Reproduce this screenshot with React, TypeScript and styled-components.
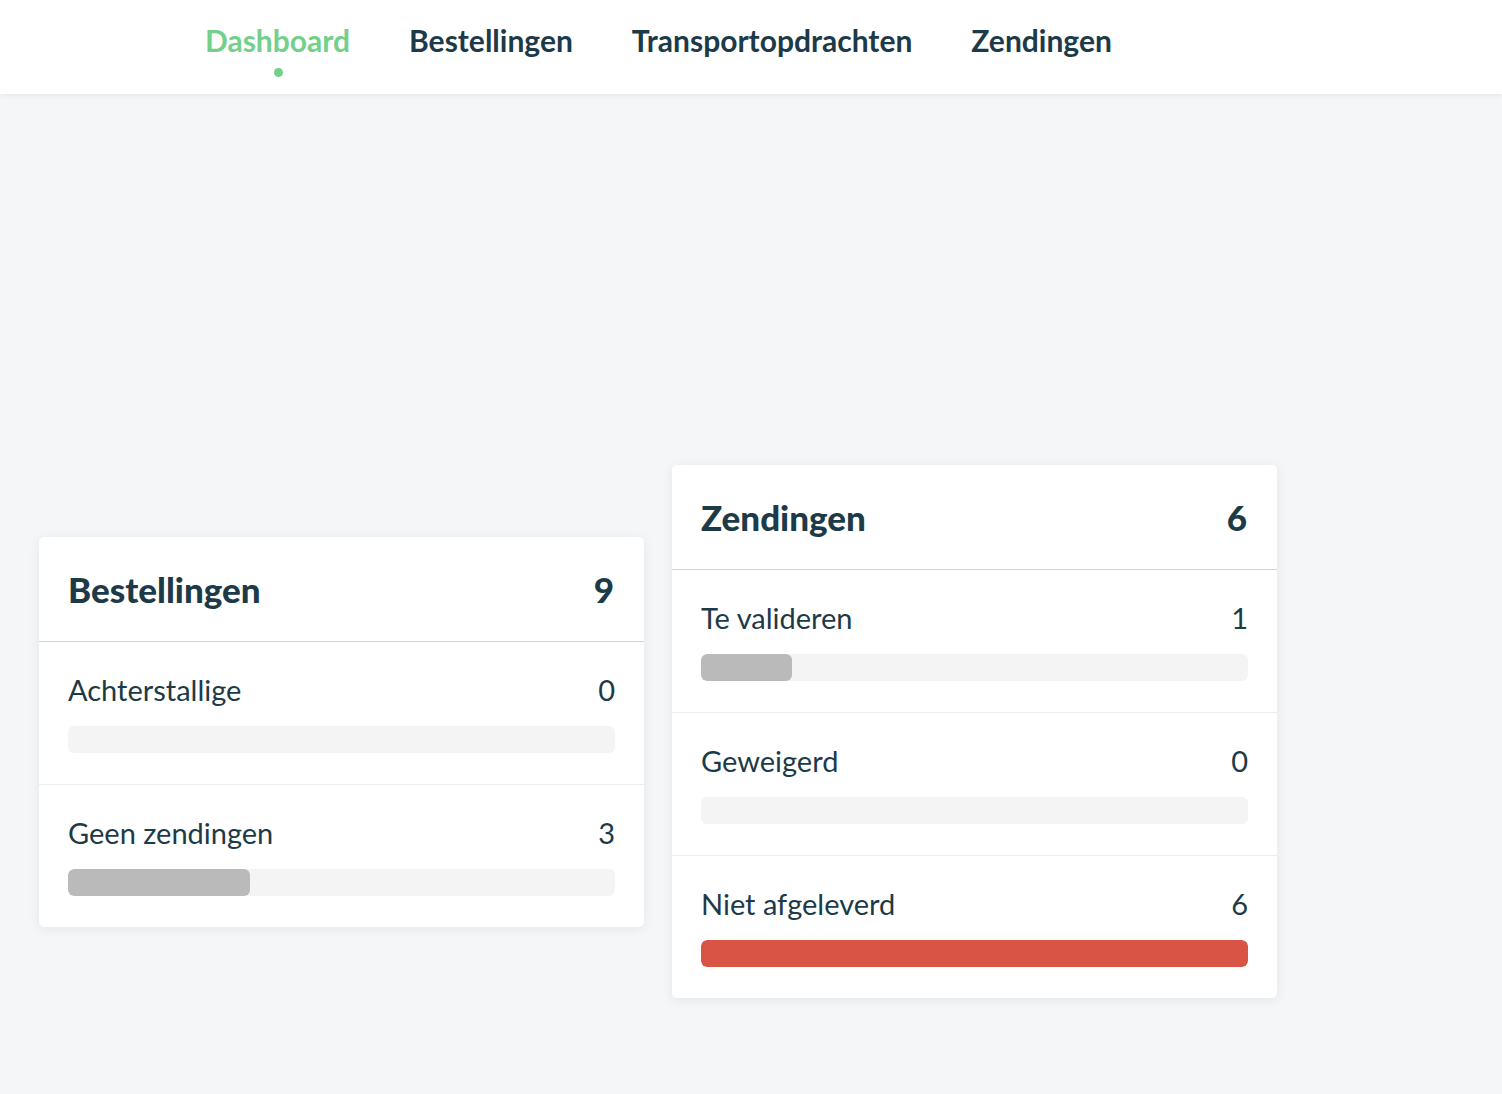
import React from "react";
import styled, { createGlobalStyle } from "styled-components";

const GlobalStyle = createGlobalStyle`
  html, body {
    margin: 0;
    padding: 0;
    background: #f4f6f7;
    font-family: Lato, "Noto Sans", sans-serif;
    color: #1d3a48;
  }
`;

const Page = styled.div`
  min-height: 1094px;
  background: #f4f6f7;
`;

const NavBar = styled.nav`
  display: flex;
  align-items: flex-start;
  gap: 59px;
  height: 94px;
  padding-left: 205px;
  box-sizing: border-box;
  background: #ffffff;
  box-shadow: 0 1px 6px rgba(0, 0, 0, 0.08);
`;

const NavItem = styled.a<{ $active?: boolean }>`
  position: relative;
  padding-top: 22px;
  font-size: 30px;
  font-weight: 700;
  line-height: 36px;
  text-decoration: none;
  color: ${(p) => (p.$active ? "#72d08b" : "#1d3a48")};

  &::after {
    content: "";
    display: ${(p) => (p.$active ? "block" : "none")};
    position: absolute;
    left: 50%;
    top: 68px;
    width: 9px;
    height: 9px;
    margin-left: -4px;
    border-radius: 50%;
    background: #72d08b;
  }
`;

const Content = styled.main`
  display: grid;
  grid-template-columns: 605px 605px;
  gap: 28px;
  align-items: center;
  padding: 371px 0 0 39px;
`;

const Card = styled.section`
  background: #ffffff;
  border-radius: 5px;
  box-shadow: 0 2px 12px rgba(0, 0, 0, 0.07);
  overflow: hidden;
`;

const CardHeader = styled.header`
  display: flex;
  justify-content: space-between;
  align-items: center;
  padding: 30px 30px 29px 29px;
  border-bottom: 1px solid #d3d3d3;
`;

const CardTitle = styled.h2`
  margin: 0;
  font-size: 35px;
  font-weight: 900;
  line-height: 45px;
`;

const CardTotal = styled.span`
  font-size: 35px;
  font-weight: 900;
  line-height: 45px;
`;

const Row = styled.div`
  padding: 30px 29px 31px 29px;
  border-bottom: 1px solid #ececec;

  &:last-child {
    border-bottom: none;
  }
`;

const RowTop = styled.div`
  display: flex;
  justify-content: space-between;
  align-items: center;
  font-size: 29px;
  font-weight: 400;
  line-height: 36px;
`;

const Track = styled.div`
  margin-top: 18px;
  height: 27px;
  border-radius: 6px;
  background: #f4f4f4;
  overflow: hidden;
`;

const Fill = styled.div<{ $tone: "grey" | "red" }>`
  height: 100%;
  border-radius: 6px;
  background: ${(p) => (p.$tone === "red" ? "#d95444" : "#bababa")};
`;

type Stat = { label: string; value: number; tone: "grey" | "red" };

const StatCard = ({ title, total, stats }: { title: string; total: number; stats: Stat[] }) => (
  <Card>
    <CardHeader>
      <CardTitle>{title}</CardTitle>
      <CardTotal>{total}</CardTotal>
    </CardHeader>
    {stats.map((s) => (
      <Row key={s.label}>
        <RowTop>
          <span>{s.label}</span>
          <span>{s.value}</span>
        </RowTop>
        <Track>
          <Fill $tone={s.tone} style={{ width: `${(s.value / total) * 100}%` }} />
        </Track>
      </Row>
    ))}
  </Card>
);

const App = () => (
  <Page>
    <GlobalStyle />
    <NavBar>
      <NavItem $active>Dashboard</NavItem>
      <NavItem>Bestellingen</NavItem>
      <NavItem>Transportopdrachten</NavItem>
      <NavItem>Zendingen</NavItem>
    </NavBar>
    <Content>
      <StatCard
        title="Bestellingen"
        total={9}
        stats={[
          { label: "Achterstallige", value: 0, tone: "grey" },
          { label: "Geen zendingen", value: 3, tone: "grey" },
        ]}
      />
      <StatCard
        title="Zendingen"
        total={6}
        stats={[
          { label: "Te valideren", value: 1, tone: "grey" },
          { label: "Geweigerd", value: 0, tone: "grey" },
          { label: "Niet afgeleverd", value: 6, tone: "red" },
        ]}
      />
    </Content>
  </Page>
);

export default App;
